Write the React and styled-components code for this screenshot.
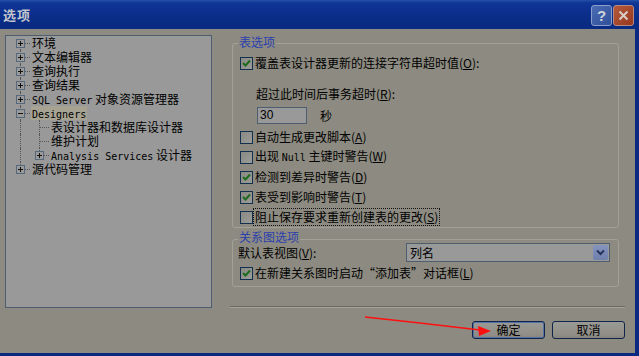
import styled, { createGlobalStyle } from "styled-components";

const GlobalStyle = createGlobalStyle`
  body {
    margin: 0;
    padding: 0;
    font-family: "Noto Sans CJK SC", "Liberation Sans", sans-serif;
    font-size: 12px;
    color: #000;
    background: #8d8b81;
  }

  * {
    box-sizing: border-box;
  }
`;

const Window = styled.div`
  position: relative;
  width: 639px;
  height: 356px;
  display: flex;
  flex-direction: column;
  background: #0a2a82;
  overflow: hidden;
`;

const TitleBar = styled.div`
  height: 29px;
  flex: none;
  display: flex;
  align-items: flex-start;
  padding: 0 5px 0 3px;
  background: linear-gradient(#2550a8 0, #0f3596 3px, #0a2f8c 45%, #092a80 90%, #0a2c86 100%);
`;

const Title = styled.div`
  margin-top: 7px;
  font-size: 13px;
  font-weight: bold;
  line-height: 16px;
  color: #c2c5cc;
  letter-spacing: 1px;
`;

const TitleButtons = styled.div`
  margin-left: auto;
  margin-top: 5px;
  display: flex;
  gap: 1px;
`;

const CaptionButton = styled.div`
  width: 21px;
  height: 21px;
  border: 1px solid ${(p) => (p.$close ? "#b98a80" : "#8a9fcc")};
  border-radius: 3px;
  background: ${(p) =>
    p.$close
      ? "linear-gradient(135deg, #b45a3c, #98381f)"
      : "linear-gradient(135deg, #4b6cb4, #2f4f9a)"};
  display: flex;
  align-items: center;
  justify-content: center;
  color: #cfd3dc;
  font-family: "Liberation Sans", sans-serif;
  font-weight: bold;
  font-size: 15px;
`;

const Client = styled.div`
  flex: 1;
  margin: 0 4px 3px 0;
  background: #8d8b81;
  display: flex;
  flex-direction: column;
`;

const Main = styled.div`
  display: flex;
  gap: 18px;
  padding: 5px 0 0 5px;
`;

const Tree = styled.div`
  width: 207px;
  height: 273px;
  margin-top: 1px;
  border: 1px solid #4c5e70;
  background: #999999;
  padding-left: 5px;
`;

const TreeRow = styled.div`
  display: flex;
  height: 14px;
  line-height: 14px;
  white-space: nowrap;
`;

const Cell = styled.span`
  position: relative;
  flex: none;
  width: 19px;
  height: 14px;

  &::before {
    content: "";
    display: ${(p) => (p.$up || p.$down ? "block" : "none")};
    position: absolute;
    left: 9px;
    top: ${(p) => (p.$up ? "0" : "7px")};
    bottom: ${(p) => (p.$down ? "0" : "7px")};
    border-left: 1px dotted #555;
  }

  &::after {
    content: "";
    display: ${(p) => (p.$right ? "block" : "none")};
    position: absolute;
    left: 10px;
    top: 7px;
    width: 9px;
    border-top: 1px dotted #555;
  }
`;

const Expander = styled.svg`
  position: absolute;
  left: 5px;
  top: 3px;
  z-index: 1;
`;

const TreeText = styled.span`
  margin-left: 1px;
  padding: 0 1px;
  background: ${(p) => (p.$selected ? "#a6a393" : "transparent")};
`;

const Mono = styled.span`
  font-family: "DejaVu Sans Mono", "Liberation Mono", monospace;
  font-size: 10px;
`;

const RightCol = styled.div`
  width: 395px;
  height: 274px;
  display: flex;
  flex-direction: column;
`;

const Group = styled.div`
  position: relative;
  width: 387px;
  margin: ${(p) => p.$top}px 0 0 2px;
  padding: ${(p) => p.$pad};
  border: 1px solid #a3a196;
  border-radius: 3px;
`;

const Legend = styled.span`
  position: absolute;
  left: 5px;
  top: ${(p) => p.$top}px;
  padding: 0 1px;
  line-height: 14px;
  background: #8d8b81;
  color: #2b3fae;
`;

const CheckRow = styled.div`
  display: flex;
  align-items: center;
  height: ${(p) => p.$h}px;
  margin-top: ${(p) => p.$mt || 0}px;
  padding-left: ${(p) => p.$pl || 0}px;
  white-space: nowrap;
`;

const Box = styled.span`
  flex: none;
  width: 13px;
  height: 13px;
  border: 1px solid #13304f;
  background: linear-gradient(135deg, #8a8a84, #9b9b98);
  display: flex;
  align-items: center;
  justify-content: center;
`;

const CheckLabel = styled.span`
  padding: 0 1px;
  line-height: 16px;
  border: 1px ${(p) => (p.$focus ? "dotted #111" : "solid transparent")};
`;

const Key = styled.span`
  text-decoration: underline;
`;

const FieldLabel = styled.div`
  margin-top: 15px;
  padding-left: 16px;
  height: 16px;
  line-height: 16px;
`;

const InputRow = styled.div`
  display: flex;
  align-items: center;
  gap: 13px;
  margin-top: 5px;
  padding-left: 17px;
`;

const TextInput = styled.div`
  width: 50px;
  height: 17px;
  border: 1px solid #4c5e70;
  background: #999999;
  padding-left: 2px;
  line-height: 15px;
  font-family: "Liberation Sans", sans-serif;
`;

const OptionList = styled.div`
  margin-top: 3px;
`;

const SelectRow = styled.div`
  display: flex;
  align-items: center;
  height: 19px;
`;

const Select = styled.div`
  margin-left: auto;
  width: 204px;
  height: 19px;
  border: 1px solid #4c5e70;
  background: #999999;
  display: flex;
  align-items: center;
  padding-left: 3px;
`;

const DropButton = styled.span`
  margin-left: auto;
  margin-right: 1px;
  width: 15px;
  height: 15px;
  border-radius: 2px;
  background: linear-gradient(#8494bd, #7080ad);
  display: flex;
  align-items: center;
  justify-content: center;
`;

const Separator = styled.div`
  margin-top: auto;
  height: 2px;
  border-top: 1px solid #6c6a63;
  border-bottom: 1px solid #a3a198;
`;

const Footer = styled.div`
  display: flex;
  justify-content: flex-end;
  gap: 7px;
  padding: 13px 10px 0 0;
`;

const Button = styled.div`
  width: 73px;
  height: 18px;
  border: 1px solid #0f2548;
  border-radius: 3px;
  background: linear-gradient(#9a9a96, #8f8d86 80%, #85837b);
  box-shadow: ${(p) => (p.$default ? "inset 0 0 0 1px #5670a8" : "none")};
  display: flex;
  align-items: center;
  justify-content: center;
  font-size: 12px;
  line-height: 16px;
`;

const Overlay = styled.svg`
  position: absolute;
  left: 0;
  top: 0;
  pointer-events: none;
`;

const treeItems = [
  { text: "环境", box: "+", cells: [{ down: true }] },
  { text: "文本编辑器", box: "+", cells: [{ up: true, down: true }] },
  { text: "查询执行", box: "+", cells: [{ up: true, down: true }] },
  { text: "查询结果", box: "+", cells: [{ up: true, down: true }] },
  {
    text: (
      <>
        <Mono>SQL Server</Mono> 对象资源管理器
      </>
    ),
    box: "+",
    cells: [{ up: true, down: true }],
  },
  { text: <Mono>Designers</Mono>, box: "-", selected: true, cells: [{ up: true, down: true }] },
  { text: "表设计器和数据库设计器", cells: [{ up: true, down: true }, { up: true, down: true }] },
  { text: "维护计划", cells: [{ up: true, down: true }, { up: true, down: true }] },
  {
    text: (
      <>
        <Mono>Analysis Services</Mono> 设计器
      </>
    ),
    box: "+",
    cells: [{ up: true, down: true }, { up: true }],
  },
  { text: "源代码管理", box: "+", cells: [{ up: true }] },
];

const ExpandBox = ({ sign }) => (
  <Expander width="9" height="9" viewBox="0 0 9 9">
    <rect x="0.5" y="0.5" width="8" height="8" fill="#9a9a9a" stroke="#56687a" />
    <line x1="2" y1="4.5" x2="7" y2="4.5" stroke="#111" />
    {sign === "+" && <line x1="4.5" y1="2" x2="4.5" y2="7" stroke="#111" />}
  </Expander>
);

const Check = ({ checked }) => (
  <Box>
    {checked && (
      <svg width="9" height="9" viewBox="0 0 9 9">
        <path d="M1 4 L3.5 6.5 L8 1.5" fill="none" stroke="#1d6b1d" strokeWidth="2" />
      </svg>
    )}
  </Box>
);

const options = [
  { label: "自动生成更改脚本", key: "A", checked: false },
  { label: <>出现 <Mono>Null</Mono> 主键时警告</>, key: "W", checked: false },
  { label: "检测到差异时警告", key: "D", checked: true },
  { label: "表受到影响时警告", key: "T", checked: true },
  { label: "阻止保存要求重新创建表的更改", key: "S", checked: false, focus: true },
];

const App = () => {
  return (
    <>
      <GlobalStyle />
      <Window>
        <TitleBar>
          <Title>选项</Title>
          <TitleButtons>
            <CaptionButton>?</CaptionButton>
            <CaptionButton $close>
              <svg width="11" height="11" viewBox="0 0 11 11">
                <path d="M1.5 1.5 L9.5 9.5 M9.5 1.5 L1.5 9.5" stroke="#d6cfc8" strokeWidth="2" />
              </svg>
            </CaptionButton>
          </TitleButtons>
        </TitleBar>
        <Client>
          <Main>
            <Tree>
              {treeItems.map((item, i) => (
                <TreeRow key={i}>
                  {item.cells.map((c, j) => {
                    const last = j === item.cells.length - 1;
                    return (
                      <Cell key={j} $up={c.up} $down={c.down} $right={last}>
                        {last && item.box && <ExpandBox sign={item.box} />}
                      </Cell>
                    );
                  })}
                  <TreeText $selected={item.selected}>{item.text}</TreeText>
                </TreeRow>
              ))}
            </Tree>
            <RightCol>
              <Group $top={9} $pad="11px 0 0 7px">
                <Legend $top={-9}>表选项</Legend>
                <CheckRow $h={16}>
                  <Check checked />
                  <CheckLabel>
                    覆盖表设计器更新的连接字符串超时值(<Key>O</Key>):
                  </CheckLabel>
                </CheckRow>
                <FieldLabel>
                  超过此时间后事务超时(<Key>R</Key>):
                </FieldLabel>
                <InputRow>
                  <TextInput>30</TextInput>
                  <span>秒</span>
                </InputRow>
                <OptionList>
                  {options.map((o, i) => (
                    <CheckRow key={i} $h={20}>
                      <Check checked={o.checked} />
                      <CheckLabel $focus={o.focus}>
                        {o.label}(<Key>{o.key}</Key>)
                      </CheckLabel>
                    </CheckRow>
                  ))}
                </OptionList>
              </Group>
              <Group $top={11} $pad="3px 8px 5px 5px">
                <Legend $top={-10}>关系图选项</Legend>
                <SelectRow>
                  <span>
                    默认表视图(<Key>V</Key>):
                  </span>
                  <Select>
                    列名
                    <DropButton>
                      <svg width="9" height="7" viewBox="0 0 9 7">
                        <path d="M1 1.5 L4.5 5 L8 1.5" fill="none" stroke="#26345a" strokeWidth="2" />
                      </svg>
                    </DropButton>
                  </Select>
                </SelectRow>
                <CheckRow $h={16} $mt={3} $pl={2}>
                  <Check checked />
                  <CheckLabel>
                    在新建关系图时启动“添加表”对话框(<Key>L</Key>)
                  </CheckLabel>
                </CheckRow>
              </Group>
              <Separator />
            </RightCol>
          </Main>
          <Footer>
            <Button $default>确定</Button>
            <Button>取消</Button>
          </Footer>
        </Client>
        <Overlay width="639" height="356" viewBox="0 0 639 356">
          <path d="M365 317 L420 323 L480 330" fill="none" stroke="#ff1010" strokeWidth="1.5" />
          <polygon points="491,331 478,326 479,336" fill="#ff1010" />
        </Overlay>
      </Window>
    </>
  );
};

export default App;
